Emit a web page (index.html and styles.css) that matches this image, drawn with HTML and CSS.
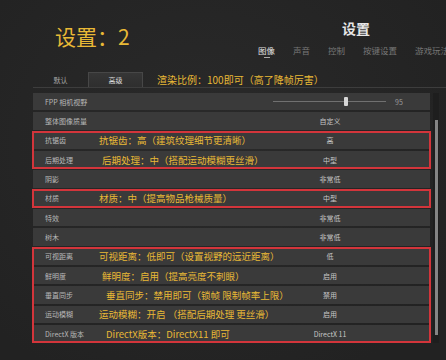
FILE: index.html
```html
<!DOCTYPE html>
<html lang="zh-CN">
<head>
    <meta charset="UTF-8">
    <title>设置 - 图像</title>
    <link rel="stylesheet" href="styles.css">
</head>
<body>
    <div class="screen">
        <header class="top">
            <div class="big-title">设置：2</div>
            <nav class="nav">
                <h1 class="nav-title">设置</h1>
                <ul class="tabs">
                    <li class="on">图像</li>
                    <li>声音</li>
                    <li>控制</li>
                    <li>按键设置</li>
                    <li>游戏玩法</li>
                </ul>
            </nav>
        </header>

        <div class="subtabs">
            <span class="subtab">默认</span>
            <span class="subtab active">高级</span>
            <span class="tip">渲染比例：100即可（高了降帧厉害）</span>
        </div>

        <div class="panel">
            <div class="rows">
                <div class="row">
                    <span class="label">FPP 相机视野</span>
                    <span class="note"></span>
                    <div class="slider-cell">
                        <div class="slider"><i class="knob"></i></div>
                        <span class="num">95</span>
                    </div>
                </div>
                <div class="row">
                    <span class="label">整体图像质量</span>
                    <span class="note"></span>
                    <span class="value">自定义</span>
                </div>

                <!-- 红框标注 -->
                <div class="group">
                    <div class="row">
                        <span class="label">抗锯齿</span>
                        <span class="note">抗锯齿：高（建筑纹理细节更清晰）</span>
                        <span class="value">高</span>
                    </div>
                    <div class="row">
                        <span class="label">后期处理</span>
                        <span class="note shift">后期处理：中（搭配运动模糊更丝滑）</span>
                        <span class="value">中型</span>
                    </div>
                </div>

                <div class="row">
                    <span class="label">阴影</span>
                    <span class="note"></span>
                    <span class="value">非常低</span>
                </div>

                <div class="group">
                    <div class="row">
                        <span class="label">材质</span>
                        <span class="note">材质：中（提高物品枪械质量）</span>
                        <span class="value">中型</span>
                    </div>
                </div>

                <div class="row">
                    <span class="label">特效</span>
                    <span class="note"></span>
                    <span class="value">非常低</span>
                </div>
                <div class="row">
                    <span class="label">树木</span>
                    <span class="note"></span>
                    <span class="value">非常低</span>
                </div>

                <div class="group">
                    <div class="row">
                        <span class="label">可视距离</span>
                        <span class="note">可视距离：低即可（设置视野的远近距离）</span>
                        <span class="value">低</span>
                    </div>
                    <div class="row">
                        <span class="label">鲜明度</span>
                        <span class="note shift">鲜明度：启用（提高亮度不刺眼）</span>
                        <span class="value">启用</span>
                    </div>
                    <div class="row">
                        <span class="label">垂直同步</span>
                        <span class="note shift-lg">垂直同步：禁用即可（锁帧 限制帧率上限）</span>
                        <span class="value">禁用</span>
                    </div>
                    <div class="row">
                        <span class="label">运动模糊</span>
                        <span class="note">运动模糊：开启 （搭配后期处理 更丝滑）</span>
                        <span class="value">启用</span>
                    </div>
                    <div class="row">
                        <span class="label">DirectX 版本</span>
                        <span class="note shift-lg">DirectX版本：DirectX11 即可</span>
                        <span class="value">DirectX 11</span>
                    </div>
                </div>
            </div>

            <div class="scrollbar"><div class="thumb"></div></div>
        </div>
    </div>
</body>
</html>
```

FILE: styles.css
```css
:root {
    --yellow: #e9b936;
    --row-bg: #3a3a3a;
    --mark: #d3353b;
}

body {
    margin: 0;
    width: 446px;
    height: 360px;
    overflow: hidden;
    background: radial-gradient(ellipse at 45% 40%, #2a2a2a, #222 85%);
    font-family: "Noto Sans CJK SC", "Noto Sans", sans-serif;
}

.screen {
    padding-left: 33px;
}

/* 顶部标题 */
.top {
    display: grid;
    grid-template-columns: 225px 196px;
    height: 72px;
}

.big-title {
    padding-left: 22px;
    margin-top: 26px;
    font-size: 21px;
    line-height: 21px;
    color: var(--yellow);
    white-space: nowrap;
}

.nav {
    text-align: center;
}

.nav-title {
    margin: 21px 0 0;
    font-size: 14px;
    line-height: 14px;
    font-weight: bold;
    color: #e6e6e6;
}

.tabs {
    display: flex;
    gap: 18px;
    margin: 10px 0 0;
    padding: 0;
    list-style: none;
    white-space: nowrap;
    font-size: 8.5px;
    line-height: 10px;
    color: #777;
}

.tabs li {
    position: relative;
}

.tabs .on {
    color: #e2e2e2;
}

.tabs .on::after {
    content: '';
    position: absolute;
    left: 50%;
    bottom: -3px;
    width: 6px;
    height: 1px;
    margin-left: -3px;
    background: #aaa;
}

/* 默认 / 高级 */
.subtabs {
    display: flex;
    height: 15px;
    border-bottom: 1px solid #3d3d3d;
}

.subtab {
    width: 55px;
    box-sizing: border-box;
    text-align: center;
    font-size: 7px;
    line-height: 17px;
    color: #a8a8a8;
}

.subtab.active {
    background: linear-gradient(#363636, #2e2e2e);
    border: 1px solid #474747;
    border-bottom: none;
    line-height: 15px;
    color: #dcdcdc;
}

.tip {
    margin-left: 14px;
    font-size: 10px;
    line-height: 15px;
    color: var(--yellow);
    white-space: nowrap;
}

/* 设置列表 */
.panel {
    display: flex;
    gap: 3px;
    margin-top: 5px;
}

.rows, .group {
    display: flex;
    flex-direction: column;
    gap: 2px;
}

.rows {
    width: 397px;
}

.group {
    outline: 2px solid var(--mark);
    outline-offset: -1px;
}

.row {
    display: grid;
    grid-template-columns: 66px minmax(0, 1fr) 200px;
    align-items: center;
    height: 17.33px;
    background: var(--row-bg);
}

.label {
    padding-left: 12px;
    font-size: 7px;
    color: #b8b8b8;
    white-space: nowrap;
}

.note {
    font-size: 9.5px;
    color: var(--yellow);
    white-space: nowrap;
}

.note.shift {
    padding-left: 3px;
}

.note.shift-lg {
    padding-left: 7px;
}

.value {
    text-align: center;
    font-size: 7px;
    color: #c6c6c6;
    white-space: nowrap;
}

.slider-cell {
    display: flex;
    align-items: center;
    gap: 9px;
    padding-left: 43px;
}

.slider {
    position: relative;
    width: 113px;
    height: 1px;
    background: #707070;
}

.knob {
    position: absolute;
    left: 71px;
    top: -4px;
    width: 4px;
    height: 9px;
    border-radius: 1px;
    background: #d6d6d6;
}

.num {
    font-size: 7px;
    color: #9a9a9a;
}

.scrollbar {
    width: 6px;
    height: 250px;
    background: #1e1e1e;
}

.thumb {
    width: 3px;
    height: 215px;
    margin: 27px 0 0 2px;
    background: #858585;
}
```
